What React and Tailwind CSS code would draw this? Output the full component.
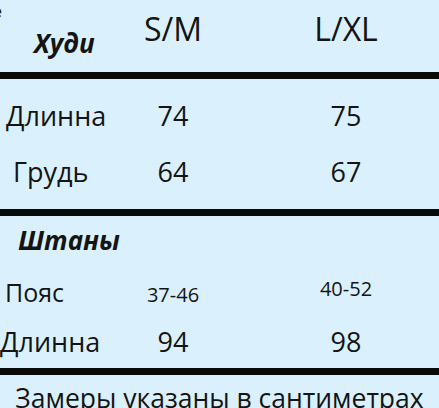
const font = { fontFamily: '"Open Sans", "Noto Sans", sans-serif' };

const Line = () => <div className="h-[7px] bg-[#0a0a0a]" />;

export default function App() {
  return (
    <div
      className="relative w-[439px] h-[408px] overflow-hidden bg-[#daf1fd] text-[#141414]"
      style={font}
    >
      {/* cut-off letter in the corner */}
      <span className="absolute left-[-7px] top-[3px] text-[16px] leading-none">е</span>

      {/* Header */}
      <div className="flex h-[72px] items-start">
        <div className="w-[128px] pl-[34px] mt-[30px] text-[26px] leading-none font-bold italic">
          Худи
        </div>
        <div className="w-[90px] mt-[13px] text-center text-[32px] leading-none">S/M</div>
        <div className="w-[90px] ml-[83px] mt-[13px] text-center text-[32px] leading-none">
          L/XL
        </div>
      </div>
      <Line />

      {/* Hoodie rows */}
      <div className="pt-[23px]">
        <div className="flex h-[56px] items-start text-[27px] leading-none">
          <div className="w-[128px] pl-[6px]">Длинна</div>
          <div className="w-[90px] text-center">74</div>
          <div className="w-[90px] ml-[83px] text-center">75</div>
        </div>
        <div className="flex h-[51px] items-start text-[27px] leading-none">
          <div className="w-[128px] pl-[13px]">Грудь</div>
          <div className="w-[90px] text-center">64</div>
          <div className="w-[90px] ml-[83px] text-center">67</div>
        </div>
      </div>
      <Line />

      {/* Pants */}
      <div className="h-[63px] pt-[11px] pl-[18px] text-[26px] leading-none font-bold italic">
        Штаны
      </div>
      <div className="flex h-[49px] items-start leading-none">
        <div className="w-[128px] pl-[5px] mt-[1px] text-[25px]">Пояс</div>
        <div className="w-[90px] mt-[6px] text-center text-[20px]">37-46</div>
        <div className="w-[90px] ml-[83px] text-center text-[20px]">40-52</div>
      </div>
      <div className="flex h-[40px] items-start text-[27px] leading-none">
        <div className="w-[128px]">Длинна</div>
        <div className="w-[90px] text-center">94</div>
        <div className="w-[90px] ml-[83px] text-center">98</div>
      </div>
      <Line />

      {/* Footer */}
      <div className="pt-[10px] text-center text-[26.5px] leading-none whitespace-nowrap">
        Замеры указаны в сантиметрах
      </div>
    </div>
  );
}
